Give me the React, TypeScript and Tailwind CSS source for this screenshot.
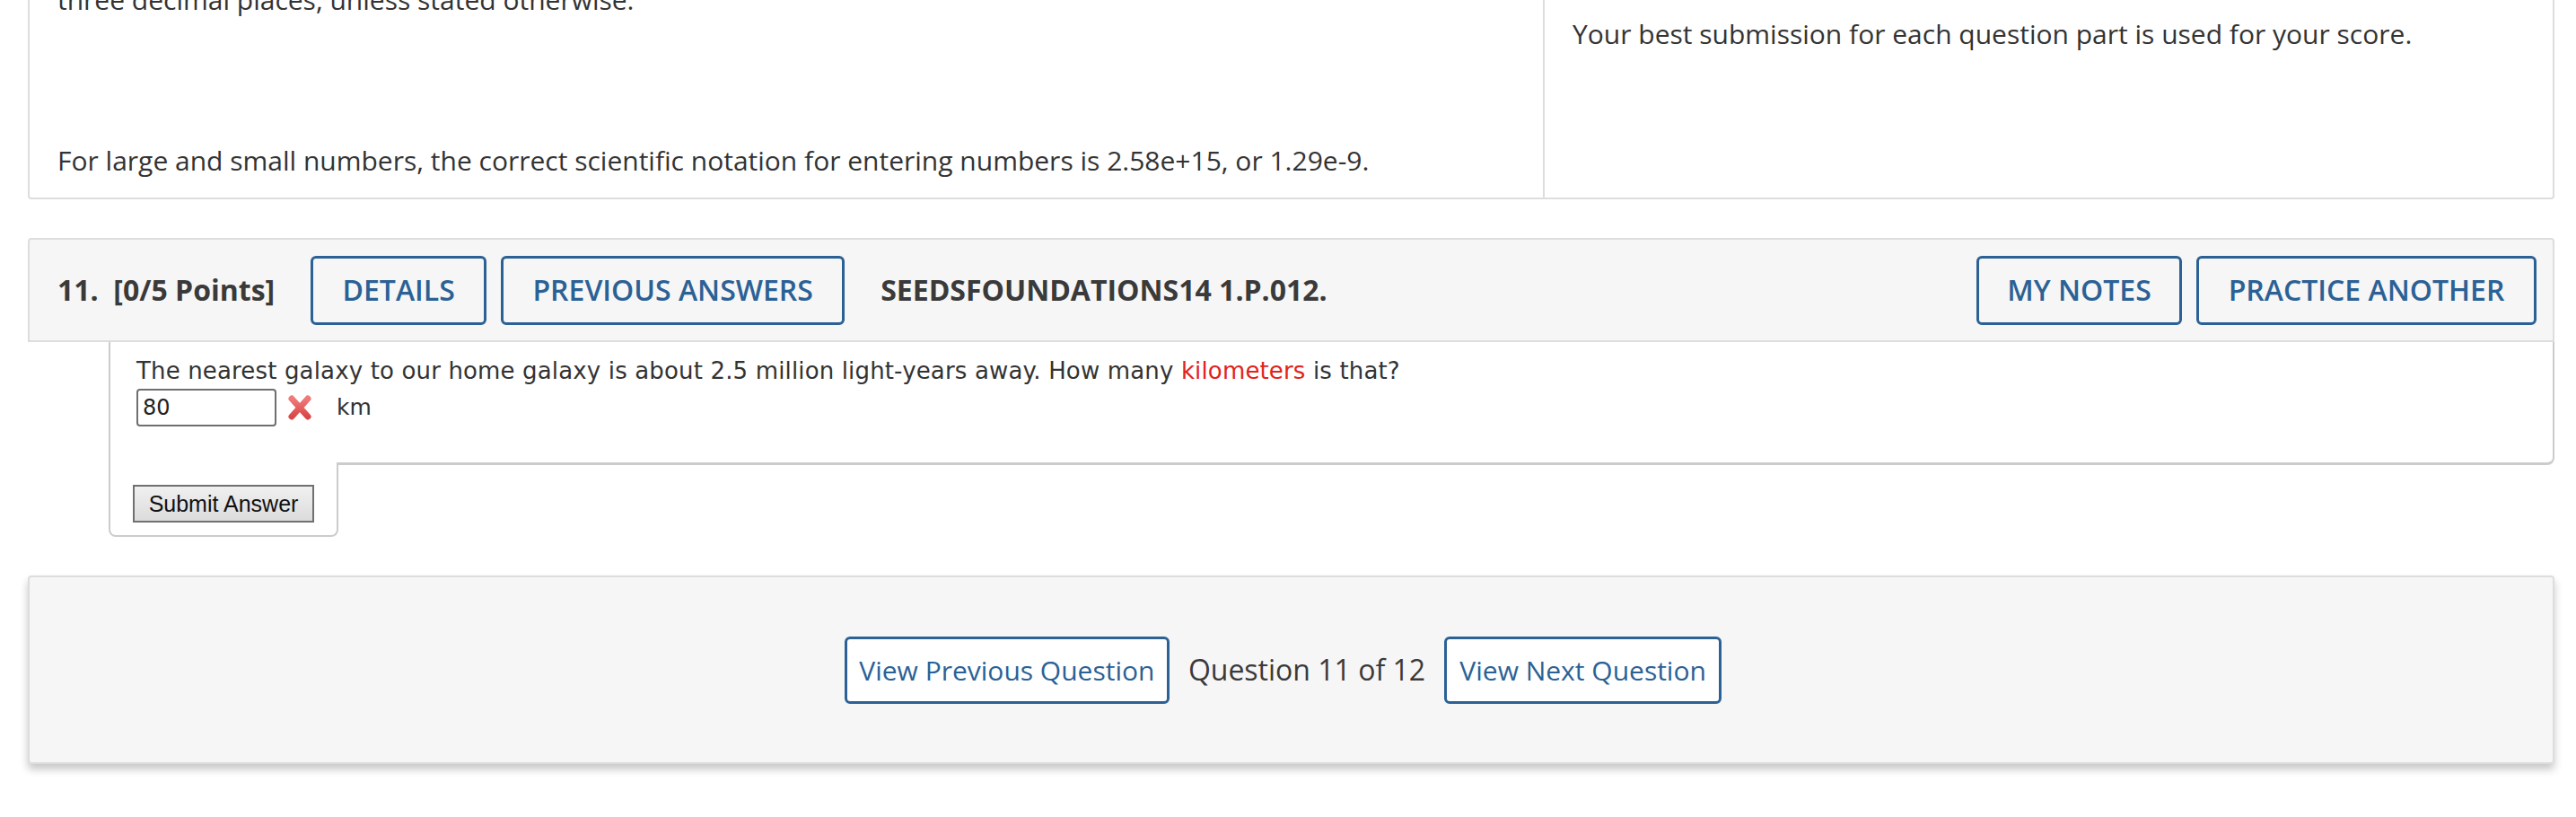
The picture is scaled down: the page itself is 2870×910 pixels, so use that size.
const sans = { fontFamily: '"Open Sans", "Liberation Sans", sans-serif' }
const verdana = { fontFamily: '"DejaVu Sans", Verdana, sans-serif' }

function OutlineButton({ children, className = '' }: { children: React.ReactNode; className?: string }) {
  return (
    <button
      type="button"
      className={`h-[77px] border-[3px] border-[#2b6195] rounded-[6px] text-[#2b6195] text-[32px] font-semibold uppercase flex items-center justify-center ${className}`}
    >
      {children}
    </button>
  )
}

function WrongMark() {
  return (
    <svg width="28" height="30" viewBox="0 0 28 30" className="mx-[12px]">
      <defs>
        <linearGradient id="xg" x1="0" y1="0" x2="0" y2="1">
          <stop offset="0" stopColor="#f07a7a" />
          <stop offset="1" stopColor="#d94848" />
        </linearGradient>
      </defs>
      <path d="M5 5 L23 25 M23 5 L5 25" stroke="url(#xg)" strokeWidth="7" strokeLinecap="round" />
    </svg>
  )
}

export default function App() {
  return (
    <div className="w-[2870px] h-[910px] overflow-hidden bg-white text-[#333]" style={sans}>
      {/* instructions panel, scrolled partly out of view */}
      <div className="ml-[31px] w-[2815px] mt-[-40px] border-2 border-[#dddddd] rounded-[4px] flex text-[30px] leading-[44px]">
        <div className="w-[1688px] border-r-2 border-[#dddddd] pl-[31px] pt-[16px] pb-[19px]">
          <p>three decimal places, unless stated otherwise.</p>
          <p className="mt-[135px]">For large and small numbers, the correct scientific notation for entering numbers is 2.58e+15, or 1.29e-9.</p>
        </div>
        <div className="flex-1 pl-[31px] pt-[54px]">
          <p>Your best submission for each question part is used for your score.</p>
        </div>
      </div>

      {/* question header */}
      <div className="ml-[31px] w-[2815px] mt-[43px] h-[116px] bg-[#f6f6f6] border-2 border-[#dddddd] rounded-t-[4px] flex items-center pl-[31px] pr-[18px]">
        <span className="text-[32px] font-bold text-[#3a3a3a] whitespace-pre">11.  [0/5 Points]</span>
        <OutlineButton className="ml-[40px] w-[196px]">Details</OutlineButton>
        <OutlineButton className="ml-[16px] w-[383px]">Previous Answers</OutlineButton>
        <span className="ml-[40px] text-[32px] font-bold text-[#3a3a3a]">SEEDSFOUNDATIONS14 1.P.012.</span>
        <div className="ml-auto flex gap-[16px]">
          <OutlineButton className="w-[229px]">My Notes</OutlineButton>
          <OutlineButton className="w-[379px]">Practice Another</OutlineButton>
        </div>
      </div>

      {/* question body */}
      <div className="ml-[121px] w-[2725px]">
        <div
          className="border-l-2 border-r-2 border-b-[3px] border-[#cccccc] rounded-br-[8px] pl-[29px] pt-[15px] h-[137px] text-[26px] text-[#333]"
          style={verdana}
        >
          <p className="leading-[34px] tracking-[0.15px]">
            The nearest galaxy to our home galaxy is about 2.5 million light-years away. How many{' '}
            <span className="text-[#e2231a]">kilometers</span> is that?
          </p>
          <div className="mt-[3px] flex items-center">
            <input
              readOnly
              value="80"
              className="w-[156px] h-[42px] border-2 border-[#6f6f6f] rounded-[4px] px-[5px] text-[24px] text-[#222] bg-white outline-none"
              style={verdana}
            />
            <WrongMark />
            <span className="ml-[15px] text-[25px]">km</span>
          </div>
        </div>
        <div className="relative -mt-[3px] w-[256px] h-[83px] bg-white border-l-2 border-r-2 border-b-2 border-[#cccccc] rounded-b-[8px] pl-[25px] pt-[25px]">
          <button
            type="button"
            className="w-[202px] h-[42px] border-2 border-[#707070] bg-gradient-to-b from-[#f0f0f0] to-[#dcdcdc] text-[25px] text-[#111] leading-none"
            style={{ fontFamily: '"Liberation Sans", Arial, sans-serif' }}
          >
            Submit Answer
          </button>
        </div>
      </div>

      {/* navigation footer */}
      <div className="ml-[31px] w-[2815px] mt-[43px] h-[210px] bg-[#f6f6f6] border-2 border-[#dddddd] rounded-[4px] shadow-[0_6px_10px_rgba(0,0,0,0.22)] flex items-center justify-center pr-[18px] text-[30px]">
        <button type="button" className="w-[362px] h-[75px] bg-white border-[3px] border-[#2b6195] rounded-[6px] text-[#2b6195]">
          View Previous Question
        </button>
        <span className="mx-[21px] text-[32px] text-[#3a3a3a]">Question 11 of 12</span>
        <button type="button" className="w-[309px] h-[75px] bg-white border-[3px] border-[#2b6195] rounded-[6px] text-[#2b6195]">
          View Next Question
        </button>
      </div>
    </div>
  )
}
